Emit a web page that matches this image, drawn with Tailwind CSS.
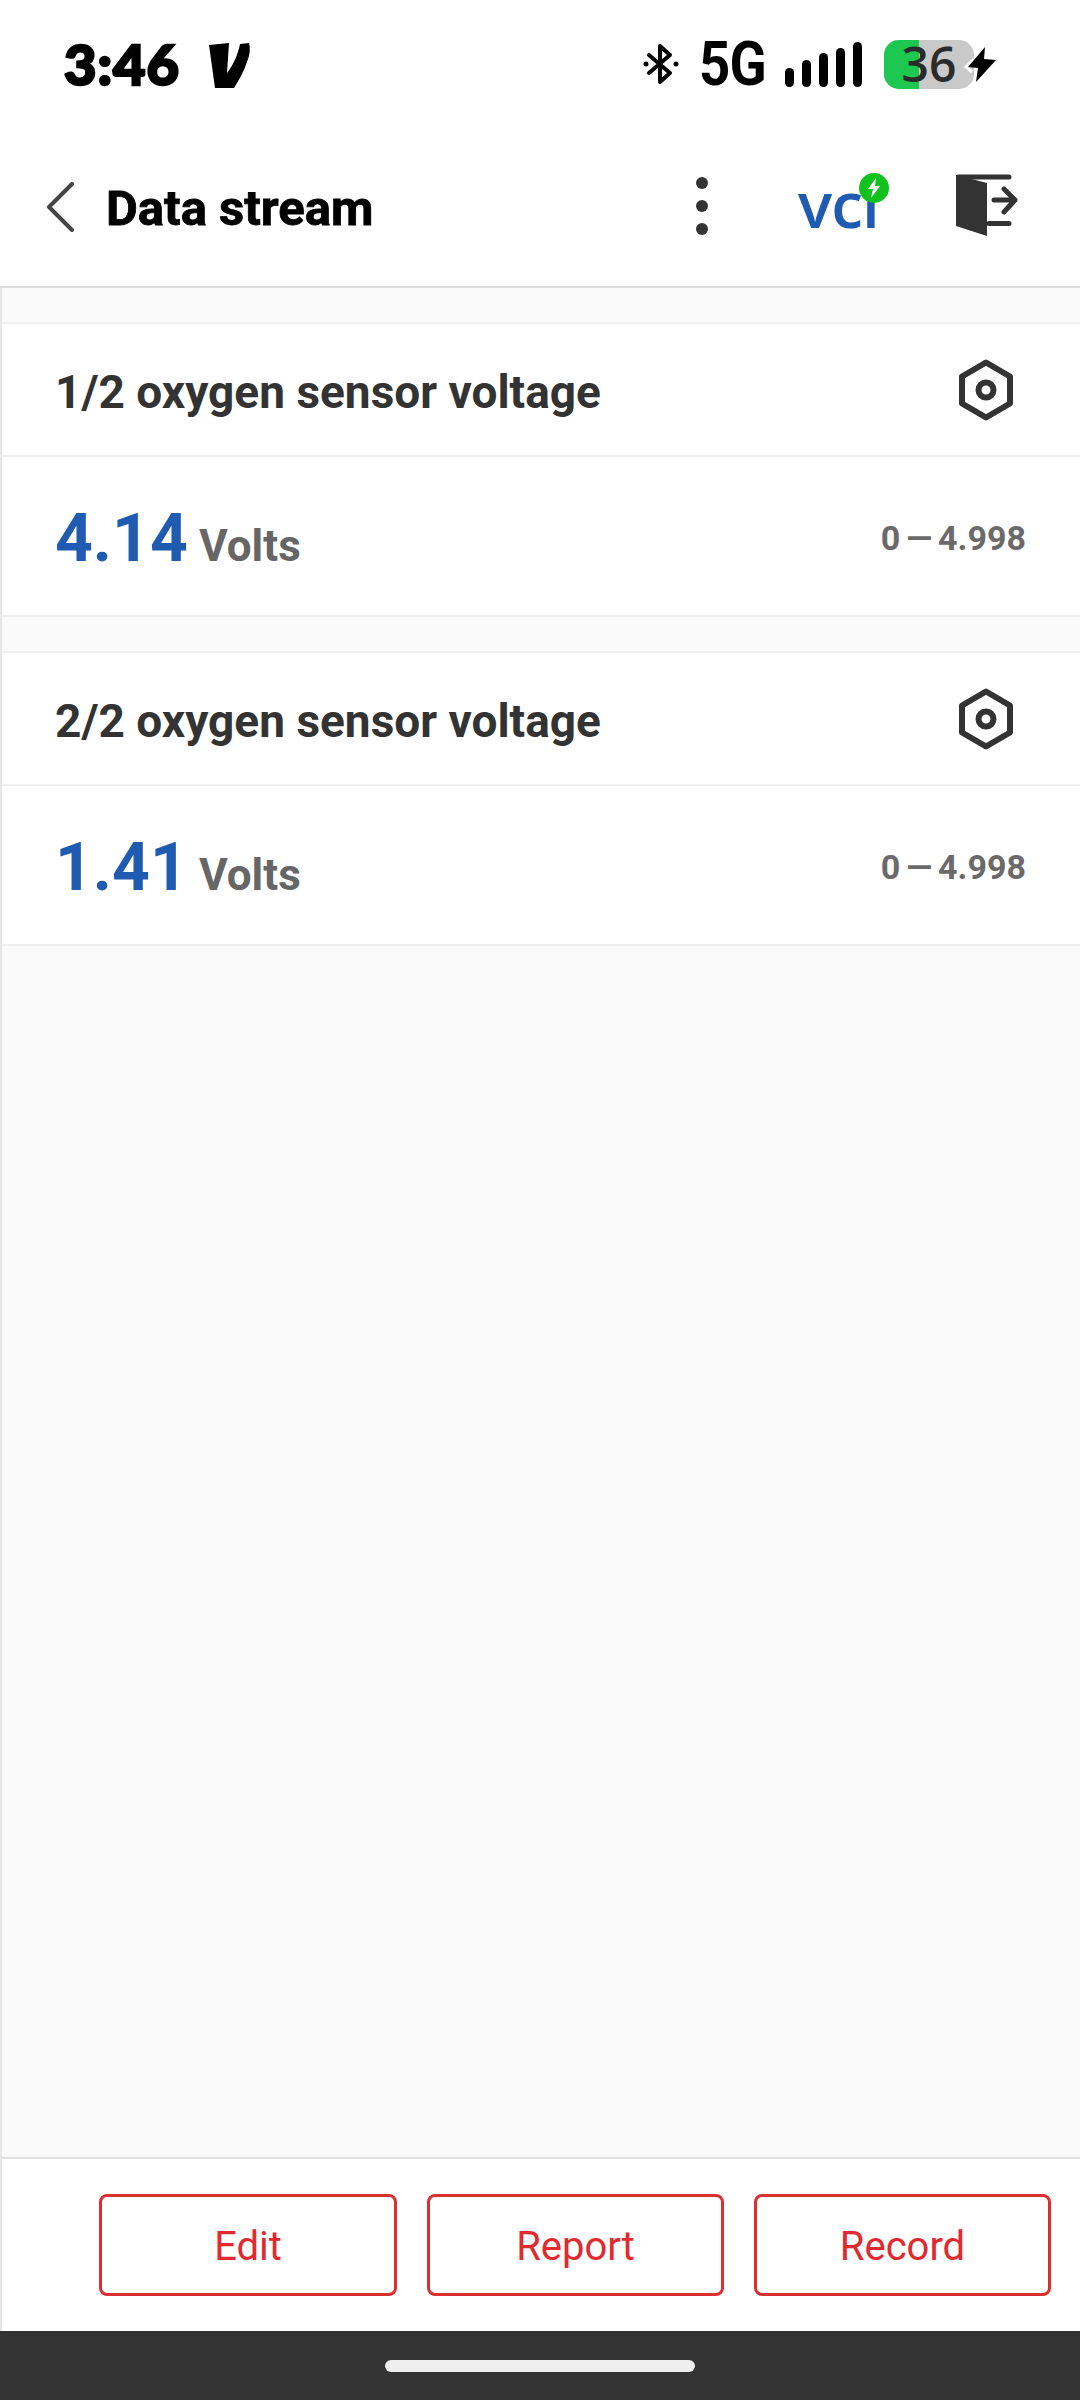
<!DOCTYPE html>
<html lang="en">
<head>
    <meta charset="UTF-8">
    <meta name="viewport" content="width=device-width, initial-scale=1.0">
    <title>Data stream</title>
    <script src="https://cdn.jsdelivr.net/npm/@tailwindcss/browser@4"></script>
</head>
<body class="bg-white font-['Roboto',sans-serif]">
<div class="w-[1080px] h-[2400px] flex flex-col overflow-hidden">

    <!-- status bar -->
    <div class="h-[128px] shrink-0 flex items-center pl-[64px] pr-[81px]">
        <span class="font-['Lato',sans-serif] font-black text-[56px] leading-none text-black [-webkit-text-stroke:2.5px_#000] tracking-[1px]">3:46</span>
        <svg class="ml-[28px] mt-[3px]" width="42" height="46" viewBox="208 43 42 46"><path d="M209 45 L229 43 L227 73 C233 65 238 55 240 44 L249 43 C251 50 249 57 247 62 C244 71 239 80 234 88 L215 88 Z" fill="#000"/></svg>
        <svg class="ml-auto" width="36" height="42" viewBox="0 0 36 42" fill="none" stroke="#000" stroke-width="4" stroke-linejoin="round" stroke-linecap="round"><path d="M6 12 L27 30 L17 39 L17 3 L27 12 L6 30"/><circle cx="3" cy="21" r="2.5" fill="#000" stroke="none"/><circle cx="33" cy="21" r="2.5" fill="#000" stroke="none"/></svg>
        <span class="ml-[20px] font-bold text-[62px] leading-none tracking-[-1px] scale-x-[0.88] origin-left w-[65px] text-black">5G</span>
        <div class="ml-[21px] flex items-end gap-[8px] h-[45px]">
            <div class="w-[9px] h-[19px] bg-black rounded-full"></div>
            <div class="w-[9px] h-[27px] bg-black rounded-full"></div>
            <div class="w-[9px] h-[34px] bg-black rounded-full"></div>
            <div class="w-[9px] h-[39px] bg-black rounded-full"></div>
            <div class="w-[9px] h-[45px] bg-black rounded-full"></div>
        </div>
        <div class="relative ml-[22px] w-[90px] h-[49px] rounded-[15px] bg-[#c9c9c9] flex items-center justify-center">
            <div class="absolute left-0 top-0 bottom-0 w-[35px] bg-[#1cc84f] rounded-l-[15px]"></div>
            <span class="relative font-['Open_Sans',sans-serif] font-semibold text-[48px] leading-none text-[#2b2b2b]">36</span>
        </div>
        <svg class="-ml-[11px] relative" width="36" height="42" viewBox="0 0 36 42"><path d="M11 16 L3 24 L9 29" fill="none" stroke="#fff" stroke-width="3"/><path d="M22 4 L5 24 L15 25 L13 39 L33 17 L21 16 Z" fill="#000"/></svg>
    </div>

    <!-- header -->
    <div class="h-[160px] shrink-0 flex items-center border-b-2 border-[#dcdcdc] pl-[47px] pr-[58px]">
        <svg width="27" height="50" viewBox="0 0 27 50" fill="none" stroke="#444" stroke-width="4" stroke-linecap="round" stroke-linejoin="round"><path d="M25 2 L2 25 L25 48"/></svg>
        <h1 class="ml-[32px] mt-[2px] text-[49px] leading-none font-bold text-black [-webkit-text-stroke:0.8px_#000]">Data stream</h1>
        <svg class="ml-auto -mt-[3px]" width="12" height="58" viewBox="0 0 12 58" fill="#333"><circle cx="6" cy="6" r="6"/><circle cx="6" cy="29" r="6"/><circle cx="6" cy="52" r="6"/></svg>
        <div class="relative ml-[90px] w-[92px] h-[66px] flex items-end -mt-[6px]">
            <span class="font-['Open_Sans',sans-serif] font-semibold text-[64px] leading-[66px] tracking-[-1px] text-[#1f5bb0]">vci</span>
            <div class="absolute right-[1px] top-[2px] w-[30px] h-[30px] rounded-full bg-[#12c21c] flex items-center justify-center">
                <svg width="16" height="22" viewBox="0 0 16 22"><path d="M10 1 L2 12 L7 12 L5 21 L14 9 L9 9 Z" fill="#fff"/></svg>
            </div>
        </div>
        <svg class="ml-[66px] -mt-[2px]" width="66" height="64" viewBox="956 175 66 64" fill="none"><path d="M956 176 L987 184 V237 L956 227 Z" fill="#333"/><path d="M958 178 H1009 M989 224.500 H1009 M994 201 H1015 M1004 190 L1015 201 L1004 213" stroke="#333" stroke-width="5" stroke-linecap="round" stroke-linejoin="round"/></svg>
    </div>

    <!-- sensors -->
    <div class="flex-1 flex flex-col bg-[#fafafa] border-l-2 border-[#e6e6e6]">
        <div class="h-[36px] shrink-0 border-b-2 border-[#f0f0f0]"></div>

        <div class="bg-white">
            <div class="h-[133px] flex items-center justify-between border-b-2 border-[#efefef] pl-[53px] pr-[66px]">
                <span class="mt-[4px] text-[46px] leading-none font-bold text-[#333]">1/2 oxygen sensor voltage</span>
                <svg width="56" height="62" viewBox="0 0 56 62" fill="none" stroke="#333" stroke-width="6" stroke-linejoin="round"><path d="M28 3.500 L52 17.500 V44.500 L28 58.500 L4 44.500 V17.500 Z"/><circle cx="28" cy="31" r="7.500"/></svg>
            </div>
            <div class="h-[160px] flex items-center justify-between border-b-2 border-[#efefef] pl-[53px] pr-[54px] pt-[5px]">
                <div class="flex items-baseline">
                    <span class="w-[144px] text-[66px] leading-none font-bold text-[#1f5bb0]">4.14</span>
                    <span class="text-[44px] leading-none font-bold text-[#666]">Volts</span>
                </div>
                <span class="-mt-[2px] text-[34px] leading-none font-bold text-[#6a6a6a]">0<span class="mx-[6px]">—</span>4.998</span>
            </div>
        </div>

        <div class="h-[36px] shrink-0 border-b-2 border-[#f0f0f0]"></div>

        <div class="bg-white">
            <div class="h-[133px] flex items-center justify-between border-b-2 border-[#efefef] pl-[53px] pr-[66px]">
                <span class="mt-[4px] text-[46px] leading-none font-bold text-[#333]">2/2 oxygen sensor voltage</span>
                <svg width="56" height="62" viewBox="0 0 56 62" fill="none" stroke="#333" stroke-width="6" stroke-linejoin="round"><path d="M28 3.500 L52 17.500 V44.500 L28 58.500 L4 44.500 V17.500 Z"/><circle cx="28" cy="31" r="7.500"/></svg>
            </div>
            <div class="h-[160px] flex items-center justify-between border-b-2 border-[#efefef] pl-[53px] pr-[54px] pt-[5px]">
                <div class="flex items-baseline">
                    <span class="w-[144px] text-[66px] leading-none font-bold text-[#1f5bb0]">1.41</span>
                    <span class="text-[44px] leading-none font-bold text-[#666]">Volts</span>
                </div>
                <span class="-mt-[2px] text-[34px] leading-none font-bold text-[#6a6a6a]">0<span class="mx-[6px]">—</span>4.998</span>
            </div>
        </div>
    </div>

    <!-- actions -->
    <div class="h-[174px] shrink-0 flex items-start justify-end gap-[30px] pt-[35px] pr-[29px] bg-white border-t-2 border-[#dedede] border-l-2 border-l-[#e6e6e6]">
        <button class="w-[298px] h-[102px] pt-[3px] border-[3px] border-[#dc2f2f] rounded-[8px] text-[40px] text-[#e2292f]">Edit</button>
        <button class="w-[297px] h-[102px] pt-[3px] border-[3px] border-[#dc2f2f] rounded-[8px] text-[40px] text-[#e2292f]">Report</button>
        <button class="w-[297px] h-[102px] pt-[3px] border-[3px] border-[#dc2f2f] rounded-[8px] text-[40px] text-[#e2292f]">Record</button>
    </div>

    <!-- gesture bar -->
    <div class="h-[69px] shrink-0 bg-[#333] flex justify-center pt-[29px]">
        <div class="w-[310px] h-[12px] rounded-full bg-[#efefef]"></div>
    </div>
</div>
</body>
</html>
